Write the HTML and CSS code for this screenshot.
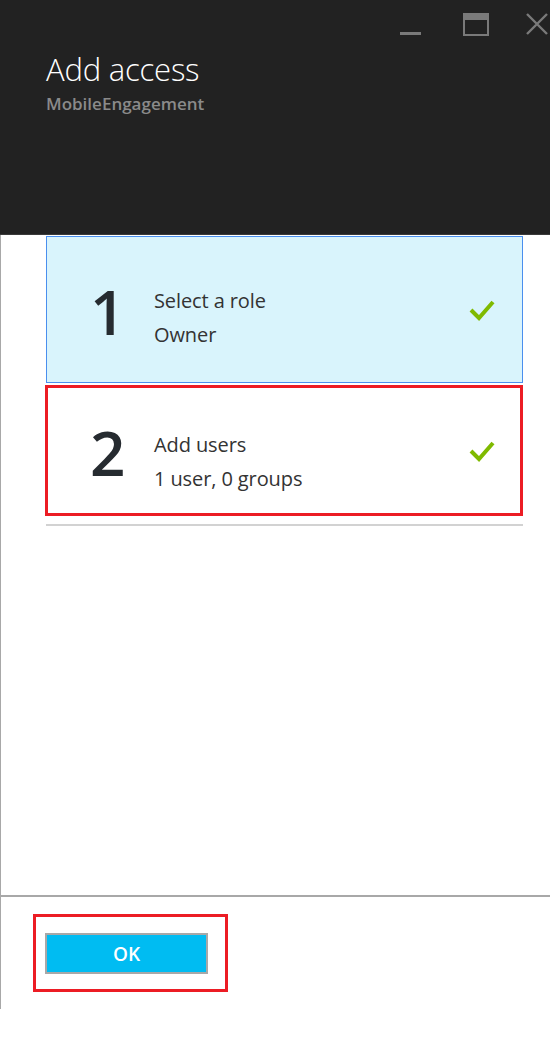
FILE: index.html
```html
<!DOCTYPE html>
<html lang="en">
<head>
<meta charset="utf-8">
<title>Add access</title>
<link rel="stylesheet" href="styles.css">
</head>
<body>
<div class="blade">
  <header class="head">
    <div class="controls">
      <svg class="ctl min" width="24" height="24" viewBox="0 0 24 24"><rect x="1" y="19" width="21" height="3" fill="#7a7a7a"/></svg>
      <svg class="ctl max" width="26" height="24" viewBox="0 0 26 24"><rect x="1" y="1" width="24" height="21" fill="none" stroke="#7a7a7a" stroke-width="2"/><rect x="1" y="1" width="24" height="6" fill="#7a7a7a"/></svg>
      <svg class="ctl close" width="22" height="24" viewBox="0 0 22 24"><path d="M1 1 L21 21 M21 1 L1 21" stroke="#7a7a7a" stroke-width="2.4" fill="none"/></svg>
    </div>
    <h1 class="title">Add access</h1>
    <div class="subtitle">MobileEngagement</div>
  </header>
  <main class="content">
    <div class="step step-active">
      <div class="num">1</div>
      <div class="info">
        <div class="label">Select a role</div>
        <div class="value">Owner</div>
      </div>
      <svg class="check" width="26" height="24" viewBox="0 0 26 24"><path d="M2 12 L10 20 L24 4" stroke="#7fba00" stroke-width="4" fill="none"/></svg>
    </div>
    <div class="step step-marked">
      <div class="num">2</div>
      <div class="info">
        <div class="label">Add users</div>
        <div class="value">1 user, 0 groups</div>
      </div>
      <svg class="check" width="26" height="24" viewBox="0 0 26 24"><path d="M2 12 L10 20 L24 4" stroke="#7fba00" stroke-width="4" fill="none"/></svg>
    </div>
    <div class="divider"></div>
  </main>
  <footer class="foot">
    <div class="mark">
      <button class="ok">OK</button>
    </div>
  </footer>
</div>
</body>
</html>
```

FILE: styles.css
```css
* { box-sizing: border-box; }
html, body { margin: 0; padding: 0; background: #fff; }
body { font-family: "Open Sans", "Noto Sans", sans-serif; }
.blade {
  width: 550px;
  height: 1009px;
  display: flex;
  flex-direction: column;
  border-left: 1px solid #a8a8a8;
}
.head {
  height: 235px;
  background: #222222;
  border-bottom: 1px solid #3a3a3a;
  margin-left: -1px;
  padding: 0 0 0 46px;
  position: relative;
}
.controls {
  position: absolute;
  top: 13px;
  right: 2px;
  display: flex;
  gap: 0;
}
.ctl { display: block; }
.min { margin-right: 40px; }
.max { margin-right: 37px; }
.title {
  margin: 0;
  padding-top: 49px;
  font-weight: 300;
  font-size: 31px;
  line-height: 40px;
  color: #ffffff;
  letter-spacing: -0.2px;
}
.subtitle {
  margin-top: 3px;
  font-size: 17px;
  font-weight: 600;
  color: #8a8a8a;
  letter-spacing: 0;
}
.content {
  flex: 1;
  padding: 1px 27px 0 44px;
  display: flex;
  flex-direction: column;
}
.step {
  display: flex;
  align-items: center;
  padding-left: 43px;
  padding-right: 27px;
}
.step-active {
  height: 147px;
  background: #d9f4fc;
  border: 1px solid #4a8fee;
  margin-left: 1px;
}
.step-marked {
  height: 131px;
  margin-top: 2px;
  border: 3px solid #ec1c24;
  padding-left: 42px;
  padding-right: 25px;
}
.num {
  width: 64px;
  font-size: 62px;
  font-weight: 600;
  color: #262b30;
  line-height: 1;
  margin-top: 2px;
}
.info { flex: 1; color: #333; font-size: 20px; padding-top: 16px; }
.step-marked .info { padding-top: 22px; }
.label { line-height: 34px; letter-spacing: -0.1px; }
.value { line-height: 34px; letter-spacing: -0.1px; }
.check { display: block; }
.divider {
  height: 2px;
  background: #d2d2d2;
  margin: 8px 0 0 1px;
}
.foot {
  height: 114px;
  border-top: 2px solid #a8a8a8;
  margin-left: -1px;
  padding: 17px 0 0 33px;
}
.mark {
  width: 195px;
  height: 78px;
  border: 3px solid #ec1c24;
  padding: 16px 0 0 9px;
}
.ok {
  display: block;
  width: 163px;
  height: 41px;
  background: #00bcf2;
  border: 2px solid #a8a8a8;
  color: #fff;
  font-family: "Open Sans", sans-serif;
  font-weight: 600;
  font-size: 19px;
  padding: 0;
  margin: 0;
}
```
